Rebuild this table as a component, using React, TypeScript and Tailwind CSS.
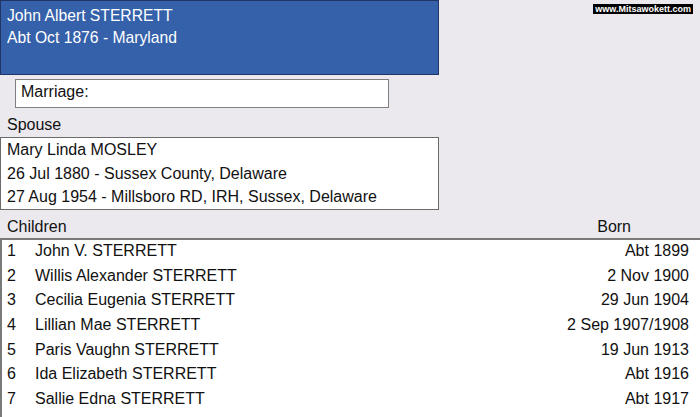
import React from "react";

const children = [
  ["1", "John V. STERRETT", "Abt 1899"],
  ["2", "Willis Alexander STERRETT", "2 Nov 1900"],
  ["3", "Cecilia Eugenia STERRETT", "29 Jun 1904"],
  ["4", "Lillian Mae STERRETT", "2 Sep 1907/1908"],
  ["5", "Paris Vaughn STERRETT", "19 Jun 1913"],
  ["6", "Ida Elizabeth STERRETT", "Abt 1916"],
  ["7", "Sallie Edna STERRETT", "Abt 1917"],
];

export default function App() {
  return (
    <div
      className="relative flex h-[417px] w-[700px] flex-col overflow-hidden bg-[#ece9ee] text-[16px] text-[#111]"
      style={{ fontFamily: '"Liberation Sans", Arial, sans-serif' }}
    >
      <div className="absolute right-[7px] top-[4px] bg-black px-[2px] text-[9px] font-bold leading-[10px] text-white">
        www.Mitsawokett.com
      </div>

      <div className="h-[75px] w-[439px] border border-[#1e3566] bg-[#3561aa] pl-[6px] pt-[4px] text-[15.7px] leading-[22px] text-white">
        <div>John Albert STERRETT</div>
        <div>Abt Oct 1876 - Maryland</div>
      </div>

      <div className="ml-[15px] mt-[4px] h-[29px] w-[374px] border border-[#808080] bg-white pl-[5px] pt-[1px] leading-[22px]">
        Marriage:
      </div>

      <div className="mt-[5px] h-[24px] pl-[7px] pt-[1px] leading-[22px]">Spouse</div>

      <div className="h-[73px] w-[439px] border border-[#6b6b6b] bg-white pl-[6px] leading-[23.5px]">
        <div>Mary Linda MOSLEY</div>
        <div>26 Jul 1880 - Sussex County, Delaware</div>
        <div>27 Aug 1954 - Millsboro RD, IRH, Sussex, Delaware</div>
      </div>

      <div className="mt-[6px] flex h-[22px] items-start justify-between pl-[7px] pr-[69px] leading-[22px]">
        <span>Children</span>
        <span>Born</span>
      </div>

      <div className="flex-1 border-l-2 border-t-2 border-[#7a7a7a] bg-white pt-[1px]">
        {children.map(([n, name, born]) => (
          <div key={n} className="flex h-[24.7px] items-start pr-[11px] leading-[19px]">
            <span className="w-[33px] pl-[5px]">{n}</span>
            <span className="flex-1">{name}</span>
            <span className="text-right">{born}</span>
          </div>
        ))}
      </div>
    </div>
  );
}
